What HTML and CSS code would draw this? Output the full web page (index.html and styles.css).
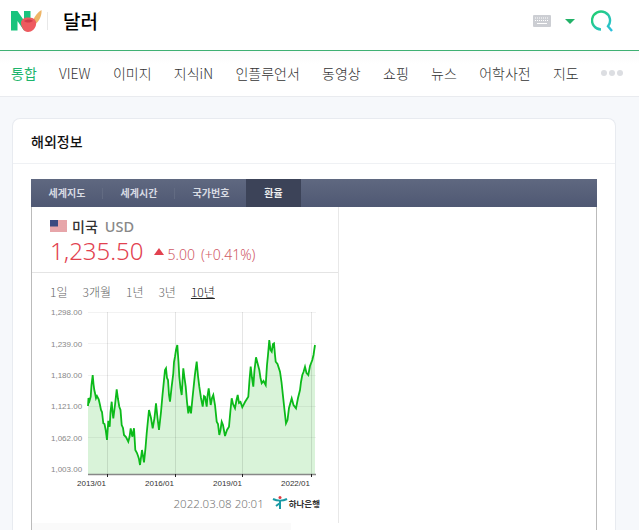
FILE: index.html
```html
<!DOCTYPE html>
<html lang="ko">
<head>
  <meta charset="UTF-8" />
  <meta name="viewport" content="width=device-width, initial-scale=1" />
  <title>달러 : 검색</title>
  <link rel="stylesheet" href="styles.css">
</head>
<body>

  <header class="top">
    <svg class="logo" width="31" height="23" viewBox="0 0 31 23">
      <path d="M0 1h6.500l6.500 9.500V1h6.500v19.500H13L6.500 11v9.500H0z" fill="#19c37d"/>
      <path d="M22 10c2-4 5-8 8.500-10 .5 5-2 11-6 14z" fill="#eeb567"/>
      <path d="M10 13c0-4 4-6 8-5.500 5 0 8 3 7 7.500-1 4-4 7-8 7-4 0-7-5-7-9z" fill="#ee5a5f"/>
      <path d="M13 11c3-2 7-2 9 0-2 1.500-6 2.500-9 0z" fill="#d13c48"/>
    </svg>
    <span class="top-divider"></span>
    <h1 class="query">달러</h1>
    <div class="top-tools">
      <svg width="18" height="12" viewBox="0 0 18 12">
        <rect width="18" height="12" rx="1" fill="#ccced3"/>
        <path d="M2 3h14M2 5.500h14" stroke="#fff" stroke-dasharray="1 1"/>
        <path d="M4 8.500h10" stroke="#fff"/>
      </svg>
      <span class="caret"></span>
      <svg class="search-icon" width="24" height="24" viewBox="0 0 24 24">
        <defs>
          <linearGradient id="q" x1="0" y1="0" x2="1" y2="1">
            <stop offset="0" stop-color="#1fcf6b"/>
            <stop offset="1" stop-color="#2cbfe0"/>
          </linearGradient>
        </defs>
        <path d="M10 20.500a9 9 0 1 1 7-3.300l4 4.800" fill="none" stroke="url(#q)" stroke-width="2.400"/>
      </svg>
    </div>
  </header>

  <nav class="tabs">
    <a class="on">통합</a>
    <a>VIEW</a>
    <a>이미지</a>
    <a>지식iN</a>
    <a>인플루언서</a>
    <a>동영상</a>
    <a>쇼핑</a>
    <a>뉴스</a>
    <a>어학사전</a>
    <a>지도</a>
    <span class="more"><i></i><i></i><i></i></span>
  </nav>

  <main class="content">
    <section class="card">
      <h2 class="card-title">해외정보</h2>
      <div class="widget-wrap">
        <div class="widget">
          <ul class="widget-tabs">
            <li>세계지도</li>
            <li>세계시간</li>
            <li>국가번호</li>
            <li class="active">환율</li>
          </ul>
          <div class="widget-body">
            <div class="rate">
              <div class="rate-head">
                <div class="country">
                  <svg width="17" height="12" viewBox="0 0 17 12">
                    <rect width="17" height="12" fill="#fff"/>
                    <path d="M0 1h17M0 3h17M0 5h17M0 7h17M0 9h17M0 11h17" stroke="#cf4d55" stroke-width="1"/>
                    <rect width="8" height="6.500" fill="#3c4a80"/>
                  </svg>
                  <strong>미국</strong>
                  <span class="code">USD</span>
                </div>
                <div class="price">
                  <span class="value">1,235.50</span>
                  <span class="arrow"></span>
                  <span class="change">5.00</span>
                  <span class="change">(+0.41%)</span>
                </div>
              </div>
              <div class="ranges">
                <a>1일</a><a>3개월</a><a>1년</a><a>3년</a><a class="sel">10년</a>
              </div>
              <svg class="chart" width="306" height="185" viewBox="32 305 306 185">
                <polygon class="area" points="88,474 88,406 88.500,398 89.500,401 90.700,396.700 91.500,385 92.700,375 93.500,384 94.300,390 95,393 96,398.300 97,396 98.700,399.300 100,405 101,410 102,412 103.300,423.300 104.500,424 105.700,430 107,440 108.300,420.700 109.700,426.700 110.500,412 111.700,401.700 112.500,412 113.300,418.300 115,405 116.700,389.300 118,399 119.300,406.700 120.500,410 121.700,425 123,428 124,435 126,437 128.300,441.700 129.500,437 130.700,428.300 132.300,436.700 134,428.300 135.300,450 137,453 138.300,456.700 139,459 140,465 142,450 144,462.300 145.500,448 146.700,433.300 148,420 149,410 151,418 152.700,428.300 154.500,418 156,403.300 157.500,418 159,430 161,412 162.500,395 164,380 165,370 166,368.300 167,378 168,380 169,395 170,401.700 171.500,388 173.300,373.300 174,362 175,356.700 176,350 177.300,345 178.500,362 179.300,376.700 180.500,388 181.700,395 183.300,368.300 184.500,378 185.700,386.700 187,402 188.300,413.300 189.500,406 191,413.300 192.500,398 194.700,376.700 195.500,370 196.700,361.700 198,376 199.300,386.700 201,398 202.700,406.700 204,396 205,396.700 206.700,406.700 207.500,396 208.700,388.300 210.700,405 212,398 213.300,395 215,405 216.700,421.700 218,424 219.300,435 220.500,430 221.700,421.700 223,425 225,436 227,430 229,426.700 230.500,410 231.700,398.300 233,404 235,408.300 236.500,400 237.700,395 239,403 240.500,402 242.300,407.300 245,402 248.300,396.700 249.500,380 250.700,366.700 252,378 253.300,386.700 254.500,370 256,357.300 258,365 259.300,370 260.500,378 261.700,383.300 263.500,381 265.700,385 267,365 268,355 269.300,340 270.500,350 271.700,351.700 273,344 274,343.300 275,355 275.700,361.700 277.500,364 280,371.700 281.500,382 282.700,393.300 284.500,410 286,423.300 287.500,420 289,408 291.700,398.300 293.500,405 296,408.300 298,398 300,390 301,382 302.300,375 303.500,372 305,366.700 306.500,373 308.300,375 310,366 312.300,360 313.500,355 315,345 315,474"/>
                <g class="grid">
                  <path d="M88 312.500H316M88 343.500H316M88 375.500H316M88 406.500H316M88 437.500H316"/>
                  <path class="grid-v" d="M107.500 312V474M175.500 312V474M242.500 312V474M311.500 312V474"/>
                </g>
                <polyline class="line" points="88,406 88.500,398 89.500,401 90.700,396.700 91.500,385 92.700,375 93.500,384 94.300,390 95,393 96,398.300 97,396 98.700,399.300 100,405 101,410 102,412 103.300,423.300 104.500,424 105.700,430 107,440 108.300,420.700 109.700,426.700 110.500,412 111.700,401.700 112.500,412 113.300,418.300 115,405 116.700,389.300 118,399 119.300,406.700 120.500,410 121.700,425 123,428 124,435 126,437 128.300,441.700 129.500,437 130.700,428.300 132.300,436.700 134,428.300 135.300,450 137,453 138.300,456.700 139,459 140,465 142,450 144,462.300 145.500,448 146.700,433.300 148,420 149,410 151,418 152.700,428.300 154.500,418 156,403.300 157.500,418 159,430 161,412 162.500,395 164,380 165,370 166,368.300 167,378 168,380 169,395 170,401.700 171.500,388 173.300,373.300 174,362 175,356.700 176,350 177.300,345 178.500,362 179.300,376.700 180.500,388 181.700,395 183.300,368.300 184.500,378 185.700,386.700 187,402 188.300,413.300 189.500,406 191,413.300 192.500,398 194.700,376.700 195.500,370 196.700,361.700 198,376 199.300,386.700 201,398 202.700,406.700 204,396 205,396.700 206.700,406.700 207.500,396 208.700,388.300 210.700,405 212,398 213.300,395 215,405 216.700,421.700 218,424 219.300,435 220.500,430 221.700,421.700 223,425 225,436 227,430 229,426.700 230.500,410 231.700,398.300 233,404 235,408.300 236.500,400 237.700,395 239,403 240.500,402 242.300,407.300 245,402 248.300,396.700 249.500,380 250.700,366.700 252,378 253.300,386.700 254.500,370 256,357.300 258,365 259.300,370 260.500,378 261.700,383.300 263.500,381 265.700,385 267,365 268,355 269.300,340 270.500,350 271.700,351.700 273,344 274,343.300 275,355 275.700,361.700 277.500,364 280,371.700 281.500,382 282.700,393.300 284.500,410 286,423.300 287.500,420 289,408 291.700,398.300 293.500,405 296,408.300 298,398 300,390 301,382 302.300,375 303.500,372 305,366.700 306.500,373 308.300,375 310,366 312.300,360 313.500,355 315,345"/>
                <path class="axis" d="M88 474.500H316"/>
                <path class="ticks" d="M107.500 474V477M175.500 474V477M242.500 474V477M311.500 474V477"/>
                <g class="y-labels">
                  <text x="51" y="315">1,298.00</text>
                  <text x="51" y="347">1,239.00</text>
                  <text x="51" y="378">1,180.00</text>
                  <text x="51" y="409">1,121.00</text>
                  <text x="51" y="441">1,062.00</text>
                  <text x="51" y="472">1,003.00</text>
                </g>
                <g class="x-labels">
                  <text x="77" y="486">2013/01</text>
                  <text x="145" y="486">2016/01</text>
                  <text x="213" y="486">2019/01</text>
                  <text x="281" y="486">2022/01</text>
                </g>
              </svg>
              <div class="source">
                <span class="stamp">2022.03.08 20:01</span>
                <span class="bank">
                  <svg width="16" height="14" viewBox="0 0 16 14">
                    <path d="M1 3c4 2 10 2 14 0" fill="none" stroke="#1a9aa5" stroke-width="2"/>
                    <path d="M8 4v9M8 7l-4 3" fill="none" stroke="#1a9aa5" stroke-width="2"/>
                    <circle cx="8" cy="1.500" r="1.500" fill="#e0393e"/>
                  </svg>
                  <b>하나은행</b>
                </span>
              </div>
            </div>
          </div>
          <div class="strip"></div>
        </div>
      </div>
    </section>
  </main>

</body>
</html>
```

FILE: styles.css
```css
/* Reset & base */
* {
  box-sizing: border-box;
}
html, body {
  height: 530px;
  overflow: hidden;
}
body {
  margin: 0;
  background: #f6f8fb;
  font-family: "Noto Sans CJK KR", "Noto Sans", sans-serif;
  color: #333;
}
h1, h2, ul {
  margin: 0;
  padding: 0;
}

/* Search bar */
.top {
  height: 51px;
  background: #fff;
  border-bottom: 1px solid #3fb073;
  display: flex;
  align-items: center;
  padding: 0 24px 8px 11px;
}
.top-divider {
  width: 1px;
  height: 18px;
  background: #e8e8e8;
  margin: 0 15px 0 5px;
}
.query {
  font-size: 19px;
  font-weight: 500;
  color: #000;
  line-height: 1;
  margin-top: -2px;
}
.top-tools {
  margin-left: auto;
  display: flex;
  align-items: center;
}
.caret {
  width: 0;
  height: 0;
  border: 5px solid transparent;
  border-top-color: #22b268;
  border-bottom: 0;
  margin: 0 16px 0 14px;
}

/* Tabs */
.tabs {
  height: 46px;
  background: linear-gradient(#fafafa, #fff 30%);
  border-bottom: 1px solid #e9ebef;
  display: flex;
  align-items: center;
  gap: 22.300px;
  padding: 0 0 1px 11px;
  font-size: 14px;
  font-weight: 300;
  color: #333;
  white-space: nowrap;
}
.tabs .on {
  color: #1db56c;
  font-weight: 400;
}
.more {
  display: flex;
  gap: 2px;
}
.more i {
  width: 6px;
  height: 6px;
  border-radius: 50%;
  background: #dcdee2;
}

/* Card */
.content {
  padding: 21px 23px 0 12px;
}
.card {
  background: #fff;
  border: 1px solid #e8ebf0;
  border-bottom: 0;
  border-radius: 8px 8px 0 0;
  height: 412px;
}
.card-title {
  height: 45px;
  border-bottom: 1px solid #eff1f4;
  font-size: 14px;
  font-weight: 500;
  color: #111;
  line-height: 44px;
  padding-left: 18px;
}
.widget-wrap {
  padding: 15px 18px 0 18px;
}
.widget {
  width: 566px;
  height: 351px;
  border-left: 1px solid #bbb;
  border-right: 1px solid #bbb;
}

/* Widget tabs */
.widget-tabs {
  height: 28px;
  margin: 0 -1px;
  background: linear-gradient(#5f6880, #4f5873);
  list-style: none;
  display: flex;
  font-size: 10px;
  font-weight: 700;
  color: #d8dbe3;
}
.widget-tabs li {
  width: 72px;
  text-align: center;
  line-height: 28px;
  background: linear-gradient(#626b82, #626b82) right 9px / 1px 11px no-repeat;
}
.widget-tabs .active {
  width: 55px;
  margin-left: -1px;
  background: #3c4358;
  color: #eee;
}

.widget-body {
  height: 316px;
}
.rate {
  width: 307px;
  height: 316px;
  border-right: 1px solid #e8e8e8;
}
.rate-head {
  height: 66px;
  border-bottom: 1px solid #e4e4e4;
  padding: 9px 0 0 18px;
}
.country {
  display: flex;
  align-items: center;
  gap: 5px;
  height: 19px;
  font-size: 14px;
}
.country strong {
  font-weight: 500;
  color: #333;
}
.code {
  font-family: "Noto Sans", sans-serif;
  font-size: 14.500px;
  color: #888;
  margin-left: 2px;
  font-weight: 500;
}
.price {
  display: flex;
  align-items: baseline;
  color: #e2414f;
  margin-top: 1px;
  height: 30px;
}
.value {
  font-family: "Noto Sans", sans-serif;
  font-size: 24px;
  font-weight: 300;
  line-height: 30px;
}
.arrow {
  width: 0;
  height: 0;
  border: 5px solid transparent;
  border-bottom: 7px solid #e2414f;
  border-top: 0;
  margin: 0 4px 0 10px;
  align-self: center;
}
.change {
  font-family: "Noto Sans", sans-serif;
  font-size: 14px;
  font-weight: 300;
  margin-right: 6px;
  color: #d05a66;
}
.ranges {
  height: 34px;
  display: flex;
  align-items: center;
  gap: 15px;
  padding: 3px 0 0 18px;
  font-size: 12px;
  font-weight: 300;
  color: #666;
  margin-bottom: -2px;
}
.ranges .sel {
  color: #222;
  text-decoration: underline;
}

/* Chart */
.chart {
  display: block;
}
.grid path {
  stroke: rgba(0, 0, 0, 0.05);
  fill: none;
}
.grid .grid-v {
  stroke: rgba(0, 0, 0, 0.1);
}
.area {
  fill: #d9f3d9;
}
.line {
  fill: none;
  stroke: #0cba1a;
  stroke-width: 1.800;
}
.axis {
  stroke: #888;
  stroke-width: 1.500;
}
.ticks {
  stroke: #222;
}
.y-labels text {
  font: 8px "Liberation Sans", sans-serif;
  fill: #888;
}
.x-labels text {
  font: 8px "Liberation Sans", sans-serif;
  fill: #333;
}

/* Source row */
.source {
  display: flex;
  justify-content: flex-end;
  align-items: center;
  gap: 8px;
  height: 26px;
  padding-right: 18px;
}
.stamp {
  font-family: "Noto Sans", sans-serif;
  font-size: 11.500px;
  font-weight: 300;
  color: #777;
}
.bank {
  display: flex;
  align-items: center;
  gap: 1px;
  font-size: 8.500px;
  color: #333;
}

.strip {
  width: 259px;
  height: 7px;
  background: #fafafa;
}
```
